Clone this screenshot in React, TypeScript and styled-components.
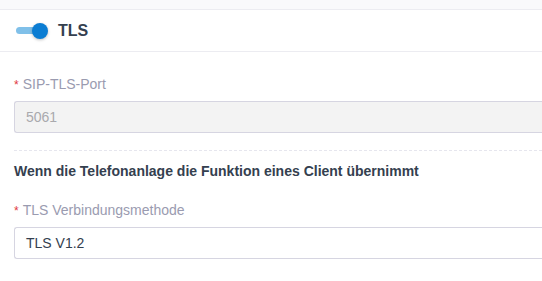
import React from "react";
import styled, { createGlobalStyle } from "styled-components";

const Global = createGlobalStyle`
  html, body { margin: 0; padding: 0; background: #ffffff; }
  body { font-family: "Liberation Sans", Arial, sans-serif; overflow: hidden; }
`;

const Page = styled.div`
  width: 542px;
  height: 281px;
  background: #ffffff;
  display: flex;
  flex-direction: column;
`;

const TopStrip = styled.div`
  height: 9px;
  background: #f9f9fb;
  border-bottom: 1px solid #ececf1;
`;

const Header = styled.div`
  height: 41px;
  display: flex;
  align-items: center;
  gap: 10px;
  padding-left: 16px;
  border-bottom: 1px solid #ececf1;
`;

const Toggle = styled.div`
  position: relative;
  width: 32px;
  height: 16px;
  display: flex;
  align-items: center;
`;

const Track = styled.div`
  width: 29px;
  height: 7px;
  border-radius: 4px;
  background: #80c0e9;
`;

const Knob = styled.div`
  position: absolute;
  left: 16px;
  top: 0;
  width: 16px;
  height: 16px;
  border-radius: 50%;
  background: #0b7dd3;
  box-shadow: 0 1px 3px rgba(0, 0, 0, 0.25);
`;

const HeaderTitle = styled.span`
  font-size: 16px;
  font-weight: 700;
  color: #34404f;
  line-height: 20px;
`;

const Body = styled.div`
  padding: 22px 0 0 14px;
  display: flex;
  flex-direction: column;
`;

const Label = styled.div`
  font-size: 14px;
  line-height: 20px;
  color: #9a9bb0;
  display: flex;
  align-items: baseline;
  gap: 4px;
`;

const Req = styled.span`
  color: #e0383e;
  font-size: 12px;
`;

const Input = styled.div<{ $disabled?: boolean }>`
  margin-top: 6px;
  height: 30px;
  border: 1px solid #d6d5e1;
  border-right: none;
  border-radius: 3px 0 0 3px;
  background: ${(p) => (p.$disabled ? "#f3f3f3" : "#ffffff")};
  color: ${(p) => (p.$disabled ? "#a9a9ad" : "#34404f")};
  font-size: 14px;
  display: flex;
  align-items: center;
  padding-left: 11px;
`;

const Divider = styled.div`
  margin-top: 17px;
  border-top: 1px dashed #e6e6ee;
`;

const SectionTitle = styled.div`
  margin-top: 10px;
  font-size: 14px;
  line-height: 20px;
  font-weight: 700;
  color: #34404f;
`;

const Spacer = styled.div<{ $h: number }>`
  height: ${(p) => p.$h}px;
`;

export default function App() {
  return (
    <Page>
      <Global />
      <TopStrip />
      <Header>
        <Toggle>
          <Track />
          <Knob />
        </Toggle>
        <HeaderTitle>TLS</HeaderTitle>
      </Header>
      <Body>
        <Label>
          <Req>*</Req>SIP-TLS-Port
        </Label>
        <Input $disabled>5061</Input>
        <Divider />
        <SectionTitle>Wenn die Telefonanlage die Funktion eines Client übernimmt</SectionTitle>
        <Spacer $h={19} />
        <Label>
          <Req>*</Req>TLS Verbindungsmethode
        </Label>
        <Input>TLS V1.2</Input>
      </Body>
    </Page>
  );
}
